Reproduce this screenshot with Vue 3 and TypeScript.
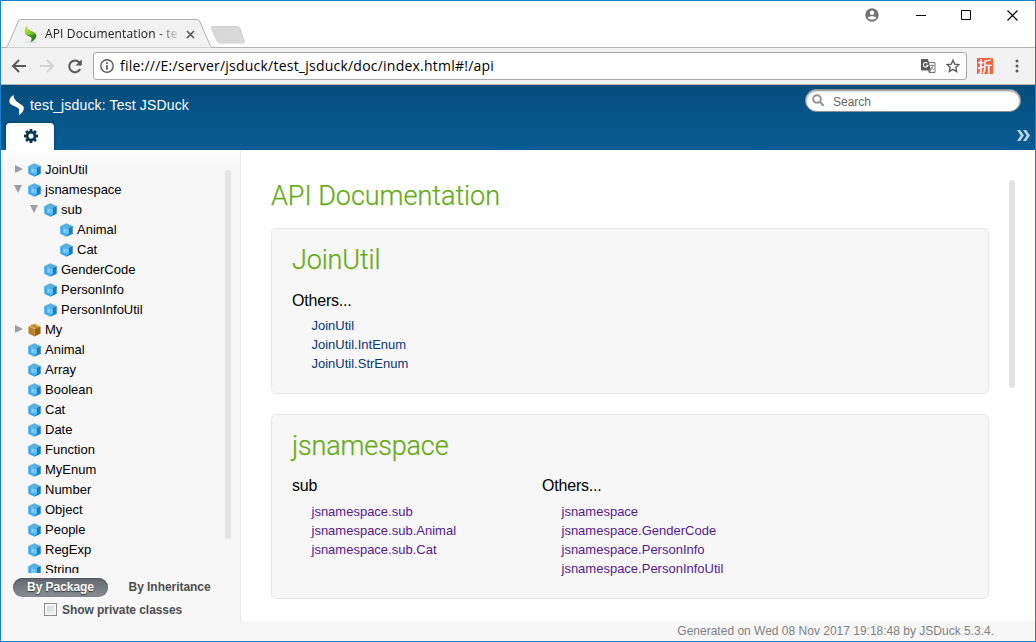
<script setup lang="ts">
interface TreeNode {
  name: string
  depth: number
  arrow?: 'closed' | 'open'
  pkg?: boolean
}

interface LinkGroup {
  title: string
  links: string[]
}

interface Section {
  title: string
  kind: string
  groups: LinkGroup[]
}

const tree: TreeNode[] = [
  { name: 'JoinUtil', depth: 0, arrow: 'closed' },
  { name: 'jsnamespace', depth: 0, arrow: 'open' },
  { name: 'sub', depth: 1, arrow: 'open' },
  { name: 'Animal', depth: 2 },
  { name: 'Cat', depth: 2 },
  { name: 'GenderCode', depth: 1 },
  { name: 'PersonInfo', depth: 1 },
  { name: 'PersonInfoUtil', depth: 1 },
  { name: 'My', depth: 0, arrow: 'closed', pkg: true },
  ...['Animal', 'Array', 'Boolean', 'Cat', 'Date', 'Function', 'MyEnum', 'Number', 'Object', 'People', 'RegExp', 'String'].map(
    (name): TreeNode => ({ name, depth: 0 }),
  ),
]

const sections: Section[] = [
  {
    title: 'JoinUtil',
    kind: 'first',
    groups: [{ title: 'Others...', links: ['JoinUtil', 'JoinUtil.IntEnum', 'JoinUtil.StrEnum'] }],
  },
  {
    title: 'jsnamespace',
    kind: 'second',
    groups: [
      { title: 'sub', links: ['jsnamespace.sub', 'jsnamespace.sub.Animal', 'jsnamespace.sub.Cat'] },
      {
        title: 'Others...',
        links: ['jsnamespace', 'jsnamespace.GenderCode', 'jsnamespace.PersonInfo', 'jsnamespace.PersonInfoUtil'],
      },
    ],
  },
]
</script>

<template>
  <div class="window">
    <div class="tabstrip">
      <svg class="tab-shape" width="250" height="29" viewBox="0 0 250 29">
        <path d="M0 28.5H5.5Q7 28.5 8 26L18 3Q19 .5 21 .5H197Q199 .5 200 3L210 26Q211 28.5 213 28.5" fill="#f2f2f2" stroke="#b3b3b3" />
        <path d="M212.500 7.500H237Q239 7.500 240 9.500L244 21.500Q245 24 243 24H220Q218 24 217 22L211.500 9.500Q210.500 7.500 212.500 7.500Z" fill="#d8d8d8" stroke="#cecece" />
      </svg>
      <div class="tab">
        <svg class="favicon" width="14" height="17" viewBox="0 0 14 17">
          <defs>
            <linearGradient id="leaf" x1="0" y1="0" x2="1" y2="1">
              <stop offset="0" stop-color="#c6ea3c" />
              <stop offset=".5" stop-color="#7cc42c" />
              <stop offset="1" stop-color="#1c6410" />
            </linearGradient>
          </defs>
          <path d="M2.500 0C.8 2 .2 4.500 1 7.500C2 9.500 6.500 10 7.500 12C8.300 13.500 7 15 6.500 16.300C10 14.500 12.300 12.500 12.300 9C12 5 3 5 2.500 0Z" fill="url(#leaf)" />
          <path d="M1.300 8C3 10 6.500 10 7.500 12C8.300 13.500 7 15 6.500 16.300C9.500 14.700 12.300 12.500 12.300 9C9 8 5 10 1.300 8Z" fill="#1e7a18" opacity=".6" />
          <path d="M1 16H13" stroke="#b9c8c8" stroke-width=".7" />
        </svg>
        <span class="tab-title">API Documentation - te</span>
        <svg class="tab-close" width="9" height="9" viewBox="0 0 9 9"><path d="M1 1L8 8M8 1L1 8" stroke="#5a5a5a" stroke-width="1.700" /></svg>
      </div>
      <div class="win-controls">
        <svg width="14" height="14" viewBox="0 0 14 14">
          <circle cx="7" cy="7" r="6.700" fill="#737373" />
          <circle cx="7" cy="4.700" r="2.200" fill="#fff" />
          <path d="M2.700 9.700C4 7.700 10 7.700 11.300 9.700C10 12.300 4 12.300 2.700 9.700Z" fill="#fff" />
        </svg>
        <svg width="10" height="12" viewBox="0 0 10 12"><path d="M0 6.500H10" stroke="#000" /></svg>
        <svg width="10" height="10" viewBox="0 0 10 10"><path d="M.5 .5H9.500V9.500H.5Z" fill="none" stroke="#000" /></svg>
        <svg width="11" height="11" viewBox="0 0 11 11"><path d="M.5 .5L10.500 10.500M10.500 .5L.5 10.500" stroke="#000" stroke-width="1.100" /></svg>
      </div>
    </div>

    <div class="toolbar">
      <svg class="nav" width="15" height="14" viewBox="0 0 15 14"><path d="M15 7H2M8 1L2 7L8 13" fill="none" stroke="#5a5a5a" stroke-width="2" /></svg>
      <svg class="nav" width="15" height="14" viewBox="0 0 15 14"><path d="M1 7H14M8 1L14 7L8 13" fill="none" stroke="#d2d2d2" stroke-width="2" /></svg>
      <svg class="nav" width="15" height="15" viewBox="0 0 15 15">
        <path d="M13.200 10A5.800 5.800 0 1 1 12.400 3.500" fill="none" stroke="#5a5a5a" stroke-width="2" />
        <path d="M14.800 .3V6.500H8.600Z" fill="#5a5a5a" />
      </svg>
      <div class="omnibox">
        <svg width="14" height="14" viewBox="0 0 14 14">
          <circle cx="7" cy="7" r="6.200" fill="none" stroke="#5a5a5a" stroke-width="1.400" />
          <path d="M7 6V10.700M7 3.300V5" stroke="#5a5a5a" stroke-width="1.700" />
        </svg>
        <span class="url">file:///E:/server/jsduck/test_jsduck/doc/index.html#!/api</span>
        <svg class="translate" width="15" height="15" viewBox="0 0 15 15">
          <path d="M5.500 3.500H14V13.500H8" fill="#f5f5f5" stroke="#777" stroke-width="1" />
          <path d="M1 0H7L10 11.500H1Q0 11.500 0 10.500V1Q0 0 1 0Z" fill="#5a5a5a" />
          <path d="M6.500 4.300A2.300 2.300 0 1 0 7 6.200H4.900" fill="none" stroke="#fff" stroke-width="1.100" />
          <path d="M8.800 6.500H13M11 5.500V6.500M12.300 6.500Q11.500 9 9.500 10.300M10 8L12.700 11" fill="none" stroke="#888" stroke-width=".9" />
          <path d="M7 11.500H10L8 14Z" fill="#5a5a5a" />
        </svg>
        <svg width="14" height="14" viewBox="0 0 14 14"><path d="M7 1.200L8.700 5.100L13 5.500L9.800 8.300L10.700 12.500L7 10.300L3.300 12.500L4.200 8.300L1 5.500L5.300 5.100Z" fill="none" stroke="#5a5a5a" stroke-width="1.400" /></svg>
      </div>
      <div class="extension">折</div>
      <svg class="menu" width="4" height="14" viewBox="0 0 4 14"><g fill="#5a5a5a"><circle cx="2" cy="2" r="1.500" /><circle cx="2" cy="7" r="1.500" /><circle cx="2" cy="12" r="1.500" /></g></svg>
    </div>

    <header class="header">
      <div class="header-top">
        <svg class="logo" width="15" height="20" viewBox="0 0 15 20"><path d="M4.500 0C1.500 2 0 4 0.500 7.500C1.500 10.500 8.500 11.500 10 14C10.700 16 9.700 18 10 20C13.500 18 15.500 15 14.500 11.500C12.500 8.500 4.500 7 4.500 0Z" fill="#fff" /></svg>
        <span class="title">test_jsduck: Test JSDuck</span>
        <div class="search">
          <svg width="13" height="13" viewBox="0 0 13 13"><circle cx="5" cy="5" r="3.800" fill="none" stroke="#949494" stroke-width="2" /><path d="M7.800 7.800L11.700 11.700" stroke="#949494" stroke-width="2.200" /></svg>
          <span>Search</span>
        </div>
      </div>
      <div class="header-tabs">
        <div class="home-tab">
          <svg width="14" height="14" viewBox="-7 -7 14 14">
            <g fill="#083452">
              <rect v-for="n in 8" :key="n" x="-1.400" y="-7" width="2.800" height="4" :transform="`rotate(${n * 45})`" />
            </g>
            <circle r="3.900" fill="none" stroke="#083452" stroke-width="2.600" />
          </svg>
        </div>
        <svg class="more" width="13" height="11" viewBox="0 0 13 11"><path d="M0 0H3.200L7 5.500L3.200 11H0L3.700 5.500ZM6 0H9.200L13 5.500L9.200 11H6L9.700 5.500Z" fill="#b9d3e2" /></svg>
      </div>
    </header>

    <div class="body">
      <aside class="sidebar">
        <div class="tree-wrap">
          <ul class="tree">
            <li v-for="(node, i) in tree" :key="i" :class="'depth-' + node.depth">
              <span class="arrow" :class="node.arrow"></span>
              <svg width="13" height="14" viewBox="0 0 14 14" preserveAspectRatio="none">
                <template v-if="node.pkg">
                  <path d="M.5 3.500L7 .5L13.500 3.500L7 6Z" fill="#d9a54c" />
                  <path d="M.5 3.500L7 6V13.500L.5 10.500Z" fill="#bd7f23" />
                  <path d="M13.500 3.500L7 6V13.500L13.500 10.500Z" fill="#98600f" />
                  <path d="M3.500 2L10 4.700V7" fill="none" stroke="#a87121" stroke-width="1" />
                </template>
                <template v-else>
                  <path d="M.3 3L7 .3L13.700 3L7 5.500Z" fill="#58afe2" />
                  <path d="M.3 3L7 5.500V13.700L.3 10.700Z" fill="#3ea6e6" />
                  <path d="M13.700 3L7 5.500V13.700L13.700 10.700Z" fill="#1b7cc4" />
                  <path d="M3.500 5L6.300 6V10.500L3.500 9.500Z" fill="#83d0f8" />
                  <path d="M6.800 6L9.500 5.300V11.300L6.800 12.300Z" fill="#6ccbfb" />
                  <path d="M3 9.500L7 10.500L10.500 9.800L7 13.300Z" fill="#38b2f4" />
                </template>
              </svg>
              <span class="label">{{ node.name }}</span>
            </li>
          </ul>
          <div class="tree-scroll"></div>
        </div>
        <div class="modes">
          <span class="mode active">By Package</span>
          <span class="mode">By Inheritance</span>
        </div>
        <div class="private"><span class="checkbox"></span><span>Show private classes</span></div>
      </aside>

      <main class="content">
        <div class="doc">
          <h1>API Documentation</h1>
          <section v-for="s in sections" :key="s.title" :class="s.kind">
            <h2>{{ s.title }}</h2>
            <div class="groups">
              <div v-for="g in s.groups" :key="g.title" class="group">
                <h3>{{ g.title }}</h3>
                <a v-for="l in g.links" :key="l">{{ l }}</a>
              </div>
            </div>
          </section>
        </div>
        <div class="doc-scroll"></div>
      </main>
    </div>
    <footer class="footer">Generated on Wed 08 Nov 2017 19:18:48 by JSDuck 5.3.4.</footer>
  </div>
</template>

<style>
html,
body {
  overflow: hidden;
}
</style>

<style scoped>
* {
  box-sizing: border-box;
}
svg {
  display: block;
  flex: none;
}
.window {
  width: 1036px;
  height: 642px;
  border: 1px solid #1a80cf;
  background: #fff;
  display: flex;
  flex-direction: column;
  font-family: 'Liberation Sans', Arial, sans-serif;
  white-space: nowrap;
  overflow: hidden;
}
.tabstrip {
  height: 47px;
  flex: none;
  position: relative;
  display: flex;
  justify-content: space-between;
  background: linear-gradient(#b3b3b3, #b3b3b3) 0 46px / 100% 1px no-repeat;
}
.tab-shape {
  position: absolute;
  left: -1px;
  top: 18px;
}
.tab {
  position: relative;
  width: 200px;
  height: 27px;
  margin-top: 19px;
  padding-left: 23px;
  display: flex;
  align-items: center;
}
.favicon {
  margin-top: 2px;
}
.tab-title {
  width: 133px;
  margin-left: 7px;
  overflow: hidden;
  font: 12px/20px 'Open Sans', sans-serif;
  letter-spacing: 0.14px;
  color: #222;
  mask-image: linear-gradient(90deg, #000 113px, transparent 136px);
}
.tab-close {
  margin: 2px 0 0 8px;
}
.win-controls {
  display: flex;
  align-items: center;
  height: 28px;
  padding-right: 17px;
}
.win-controls svg:nth-child(2) {
  margin-left: 37px;
}
.win-controls svg:nth-child(3) {
  margin-left: 35px;
}
.win-controls svg:nth-child(4) {
  margin-left: 36px;
}
.toolbar {
  height: 37px;
  flex: none;
  display: flex;
  align-items: center;
  padding-left: 10px;
  background: #f2f2f2;
  border-bottom: 1px solid #b6b4b4;
}
.nav {
  margin-right: 13px;
}
.omnibox {
  width: 874px;
  height: 28px;
  margin-left: -2px;
  padding: 0 6px;
  display: flex;
  align-items: center;
  border: 1px solid #a8a8a8;
  border-radius: 3px;
  background: #fff;
}
.url {
  flex: 1;
  margin-left: 6px;
  font: 14px/20px 'Open Sans', sans-serif;
  letter-spacing: 0.225px;
  color: #000;
}
.translate {
  margin-right: 10px;
}
.extension {
  width: 16px;
  height: 16px;
  margin-left: 10px;
  background: #f4623a;
  color: #fff;
  font: 500 15px/15px 'Noto Sans CJK SC', sans-serif;
  text-align: center;
}
.menu {
  margin-left: 22px;
}
.header {
  height: 65px;
  flex: none;
  background: linear-gradient(#064e7c, #095c94);
}
.header-top {
  height: 38px;
  display: flex;
  align-items: flex-start;
  padding: 4px 14px 0 8px;
}
.logo {
  margin-top: 6px;
}
.title {
  margin: 7px auto 0 6px;
  font-size: 14px;
  line-height: 18px;
  letter-spacing: 0.15px;
  color: #fff;
}
.search {
  width: 216px;
  height: 23px;
  padding-left: 6px;
  display: flex;
  align-items: center;
  border: 1px solid #8a9298;
  border-radius: 12px;
  background: #fff;
  box-shadow: inset 0 1px 2px #888;
  font-size: 12px;
  color: #666;
}
.search span {
  margin: 2px 0 0 8px;
}
.header-tabs {
  height: 27px;
  display: flex;
  justify-content: space-between;
  padding: 0 5px 0 5px;
}
.home-tab {
  width: 48px;
  height: 27px;
  padding: 6px 0 0 18px;
  border-radius: 4px 4px 0 0;
  background: #fff;
  box-shadow: 0 0 3px #033858;
}
.more {
  margin-top: 7px;
}
.body {
  height: 471px;
  flex: none;
  display: flex;
}
.sidebar {
  width: 240px;
  background: linear-gradient(#fff, #f7f7f7 16px);
  border-right: 1px solid #e9e9e9;
}
.tree-wrap {
  height: 423px;
  padding: 9px 9px 0 12px;
  display: flex;
  justify-content: space-between;
  overflow: hidden;
}
.tree {
  margin: 0;
  padding: 0;
  list-style: none;
}
.tree li {
  height: 20px;
  display: flex;
  align-items: center;
  font-size: 13px;
  color: #000;
}
.tree li svg {
  margin-top: 1px;
}
.tree .depth-1 {
  padding-left: 16px;
}
.tree .depth-2 {
  padding-left: 32px;
}
.arrow {
  width: 15px;
  flex: none;
}
.arrow::before {
  display: block;
  content: '';
  width: 0;
  height: 0;
}
.closed::before {
  margin-left: 2px;
  border-left: 8px solid #9f9f9f;
  border-top: 4.5px solid transparent;
  border-bottom: 4.5px solid transparent;
}
.open::before {
  margin: -1px 0 0 1px;
  border-top: 8px solid #9f9f9f;
  border-left: 4.5px solid transparent;
  border-right: 4.5px solid transparent;
}
.label {
  margin-left: 4px;
}
.tree-scroll {
  width: 6px;
  height: 369px;
  margin-top: 11px;
  border-radius: 3px;
  background: #e5e5e5;
}
.modes {
  display: flex;
  gap: 6.5px;
  margin: 5px 0 0 12px;
}
.mode {
  height: 19px;
  padding: 0 14px;
  border-radius: 10px;
  font-size: 12px;
  line-height: 18px;
  font-weight: bold;
  letter-spacing: -0.04px;
  color: #4d4d4d;
}
.mode.active {
  width: 95px;
  background: linear-gradient(#656a71, #878c93);
  box-shadow: inset 0 1px 2px #50555b;
  color: #fff;
  text-shadow: 0 1px 1px #333;
}
.private {
  display: flex;
  align-items: center;
  height: 20px;
  margin: 3px 0 0 43px;
  font-size: 12px;
  font-weight: bold;
  letter-spacing: -0.06px;
  color: #4d4d4d;
}
.checkbox {
  width: 13px;
  height: 13px;
  margin: -2px 5px 0 0;
  border: 1px solid #8e8f8f;
  background: linear-gradient(135deg, #cbcfd5, #f6f6f6);
  box-shadow: inset 0 0 0 2px #f4f4f4;
}
.content {
  flex: 1;
  padding: 30px 20px 0 30px;
  display: flex;
  justify-content: space-between;
}
.doc {
  width: 718px;
}
h1,
h2 {
  margin: 0;
  font-family: Roboto, sans-serif;
  font-weight: 300;
  font-size: 27px;
  line-height: 33px;
  letter-spacing: -0.03px;
  -webkit-text-stroke: 0.25px #66ab16;
  color: #66ab16;
}
h1 {
  margin-bottom: 15px;
}
h2 {
  letter-spacing: -0.15px;
}
section {
  padding: 15px 20px 0;
  margin-bottom: 20px;
  border: 1px solid #e8e8e8;
  border-radius: 5px;
  background: #f7f7f7;
}
.first {
  height: 166px;
}
.second {
  height: 185px;
}
.groups {
  display: flex;
}
.group {
  width: 250px;
}
h3 {
  margin: 14px 0 5px;
  font-size: 16px;
  line-height: 20px;
  letter-spacing: -0.2px;
  font-weight: normal;
  color: #000;
}
.second h3 {
  margin-top: 13px;
  margin-bottom: 6px;
}
.group a {
  display: block;
  margin-left: 19.5px;
  font-size: 13px;
  line-height: 19px;
  color: #083772;
}
.second a {
  color: #551a8b;
}
.doc-scroll {
  width: 6px;
  height: 208px;
  border-radius: 3px;
  background: #e2e2e2;
}
.footer {
  height: 20px;
  flex: none;
  padding-right: 41px;
  background: #f7f7f7;
  font-size: 12px;
  line-height: 20px;
  text-align: right;
  color: #808080;
}
</style>
